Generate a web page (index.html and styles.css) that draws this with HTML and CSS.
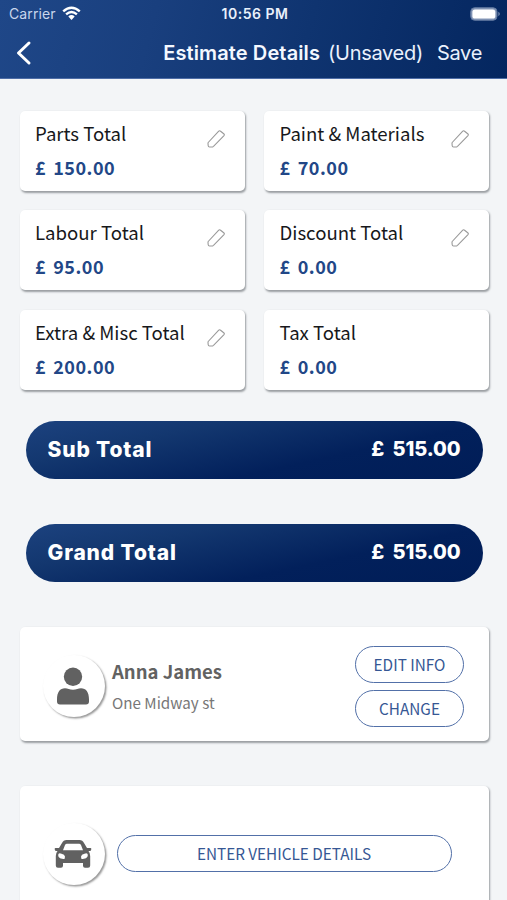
FILE: index.html
```html
<!DOCTYPE html>
<html lang="en">
<head>
<meta charset="utf-8">
<title>Estimate Details</title>
<link rel="stylesheet" href="styles.css">
</head>
<body>
<svg class="defs" aria-hidden="true">
  <symbol id="pencil" viewBox="0 0 20 20"><path d="M2.200 13.500 12.500 2.300Q13.500 1.300 14.600 2.200L18 5Q18.800 5.800 18 6.700L7.500 17.300Q6.700 18 5.600 18H3.500Q2.300 18 2.200 16.800L2 14.500Q2 13.800 2.200 13.500Z"/></symbol>
</svg>
<header class="header">
  <div class="status">
    <div class="carrier"><span>Carrier</span>
      <svg class="wifi" width="19" height="15" viewBox="0 0 19 15"><path d="M1.2 5.4Q9.5-2.1 17.8 5.4M4.1 8.4Q9.5 3.7 14.9 8.4"/><path class="dot" d="M6.3 10.4Q9.5 7.8 12.7 10.4L9.5 14Z"/></svg>
    </div>
    <span class="time">10:56 PM</span>
    <svg class="battery" width="31" height="14" viewBox="0 0 31 14"><rect class="shell" x=".7" y=".7" width="26.3" height="12.6" rx="4"/><rect class="charge" x="2.4" y="2.4" width="22.9" height="9.2" rx="2.6"/><path class="tip" d="M28.3 4.8Q31.5 7 28.3 9.2Z"/></svg>
  </div>
  <nav class="nav">
    <svg class="back" width="18" height="26" viewBox="0 0 18 26"><path d="M15 3 4.500 13 15 23"/></svg>
    <h1 class="title">Estimate Details</h1>
    <span class="state">(Unsaved)</span>
    <span class="save">Save</span>
  </nav>
</header>
<main class="content">
  <section class="grid">
    <article class="card"><div><h2>Parts Total</h2><p class="amount">£ 150.00</p></div><svg class="pencil"><use href="#pencil"/></svg></article>
    <article class="card"><div><h2>Paint &amp; Materials</h2><p class="amount">£ 70.00</p></div><svg class="pencil"><use href="#pencil"/></svg></article>
    <article class="card"><div><h2>Labour Total</h2><p class="amount">£ 95.00</p></div><svg class="pencil"><use href="#pencil"/></svg></article>
    <article class="card"><div><h2>Discount Total</h2><p class="amount">£ 0.00</p></div><svg class="pencil"><use href="#pencil"/></svg></article>
    <article class="card"><div><h2>Extra &amp; Misc Total</h2><p class="amount">£ 200.00</p></div><svg class="pencil"><use href="#pencil"/></svg></article>
    <article class="card"><div><h2>Tax Total</h2><p class="amount">£ 0.00</p></div></article>
  </section>
  <div class="total"><span class="label">Sub Total</span><span class="sum">£ 515.00</span></div>
  <div class="total"><span class="label">Grand Total</span><span class="sum">£ 515.00</span></div>
  <section class="panel customer">
    <div class="avatar"><svg width="34" height="38" viewBox="0 0 34 38"><circle cx="17" cy="9.8" r="9.200"/><path d="M1 32.500C1 25 4 21.200 9 21.200c2.700 0 4.600 1.500 8 1.500s5.300-1.500 8-1.500c5 0 8 3.800 8 11.300V34.500Q33 37.500 30 37.500H4Q1 37.500 1 34.500Z"/></svg></div>
    <div class="person"><h3>Anna James</h3><p>One Midway st</p></div>
    <div class="actions"><button class="pill">EDIT INFO</button><button class="pill">CHANGE</button></div>
  </section>
  <section class="panel vehicle">
    <div class="avatar"><svg width="38" height="30" viewBox="0 0 38 30"><path fill-rule="evenodd" d="M12.500 1H25.500Q28.600 1 30 4L33 9H36.500Q37.500 9 37.300 10.200L37 11.300Q36.800 12 36 12H34.500Q36.200 14 36.200 17V26.500Q36.200 28.800 34 28.800H31Q29 28.800 29 26.800V24H9V26.800Q9 28.800 7 28.800H4Q1.800 28.800 1.800 26.500V17Q1.800 14 3.500 12H2Q1.200 12 1 11.300L.7 10.200Q.5 9 1.500 9H5L8 4Q9.400 1 12.500 1ZM13 4.700Q11.600 4.700 11 6L9 11.200H29L27 6Q26.400 4.700 25 4.700ZM4.200 16C4.200 19 7 20 10.500 20Q11.800 17.500 10 15.800Q4.200 12.500 4.200 16ZM33.800 16C33.800 19 31 20 27.500 20Q26.200 17.500 28 15.800Q33.800 12.500 33.800 16Z"/></svg></div>
    <button class="pill wide">ENTER VEHICLE DETAILS</button>
  </section>
</main>
</body>
</html>
```

FILE: styles.css
```css
* { box-sizing: border-box; margin: 0; }
body {
  width: 507px;
  height: 900px;
  overflow: hidden;
  background: #f3f5f7;
  font-family: "Noto Sans CJK SC", "Noto Sans", sans-serif;
}
h1, h2, h3, p, span, button { white-space: nowrap; }
.defs { display: block; width: 0; height: 0; }
.header {
  height: 79px;
  background: linear-gradient(105deg, #1f4788 0%, #193f7e 30%, #0f3470 60%, #04265f 100%);
  border-bottom: 1px solid #4e6da6;
  color: #fff;
  font-family: Inter, sans-serif;
}
.status {
  display: grid;
  grid-template-columns: 1fr auto 1fr;
  align-items: center;
  height: 27px;
  padding: 0 6px 0 9px;
}
.carrier { display: flex; align-items: center; gap: 6px; color: #c9d6ec; font-size: 14px; letter-spacing: .1px; }
.wifi { fill: none; stroke: #fff; stroke-width: 2.4; }
.wifi .dot { fill: #fff; stroke: none; }
.time { font-size: 14px; font-weight: 600; letter-spacing: .5px; color: #e9f0fb; }
.battery { justify-self: end; }
.shell { fill: #8799b8; stroke: #5f779f; }
.charge { fill: #fff; }
.tip { fill: #7388ad; }
.nav { display: flex; align-items: center; height: 51px; padding: 0 25px 0 14px; font-size: 20px; letter-spacing: -.3px; color: #eaf1fd; }
.back { fill: none; stroke: #fff; stroke-width: 3; stroke-linecap: round; stroke-linejoin: round; }
.title { margin-left: auto; font-size: 20px; font-weight: 600; letter-spacing: .12px; color: #f4f8ff; }
.state { margin-left: 8px; }
.save { margin-left: 14px; }
.content { padding: 32px 17px 0 19.500px; }
.grid { display: grid; grid-template-columns: 225px 225px; gap: 19.500px; height: 278.500px; }
.card {
  display: flex;
  justify-content: space-between;
  padding: 8px 19px 0 15.500px;
  border-radius: 5px;
  background: #fff;
  box-shadow: 1px 1.500px 2px 0 #9a9ea2;
}
.card h2 { font-size: 18.600px; font-weight: 400; line-height: 28px; color: #17181b; }
.amount { margin-top: 6px; font-size: 18px; font-weight: 700; line-height: 28px; letter-spacing: .5px; word-spacing: 2.500px; color: #224787; }
.pencil { flex: none; width: 20px; height: 20px; margin-top: 10px; fill: none; stroke: #999; stroke-width: 1.1; }
.total {
  display: flex;
  align-items: center;
  justify-content: space-between;
  width: 457px;
  height: 58px;
  margin: 31.500px 0 45px 6px;
  padding: 0 22px 2px;
  border-radius: 29px;
  background: linear-gradient(168deg, #1c427f 0%, #13376f 28%, #02205b 65%, #001d57 100%);
  color: #fff;
  font: 800 20px Inter, sans-serif;
}
.total + .total { margin-top: 45px; }
.label { font-size: 21px; letter-spacing: .85px; }
.sum { word-spacing: 4px; letter-spacing: -.1px; }
.panel { display: flex; align-items: center; width: 469.500px; border-radius: 5px; background: #fff; box-shadow: 1px 1.500px 2px 0 #9a9ea2; }
.customer { height: 114px; padding: 3px 25px 0 23px; }
.vehicle { height: 150px; margin-top: 45px; padding: 0 0 15px 23px; }
.avatar { display: grid; place-items: center; flex: none; width: 62px; height: 62px; border-radius: 50%; background: #fff; box-shadow: 1.500px 1.500px 2px #999; }
.avatar svg { margin-right: 1px; fill: #616161; }
.person { margin-left: 7.500px; }
.person h3 { font-size: 18.500px; font-weight: 700; line-height: 28px; color: #626262; }
.person p { margin-top: 4px; font-size: 15.200px; line-height: 26px; color: #777; }
.actions { display: grid; gap: 7px; margin: 1px 0 0 auto; }
.pill { width: 109px; height: 37px; padding: 0; border: 1.500px solid #5270a8; border-radius: 19px; background: #fff; color: #365794; font: 400 15.300px/33px "Noto Sans CJK SC", sans-serif; }
.wide { width: 335px; margin-left: 12px; }
```
